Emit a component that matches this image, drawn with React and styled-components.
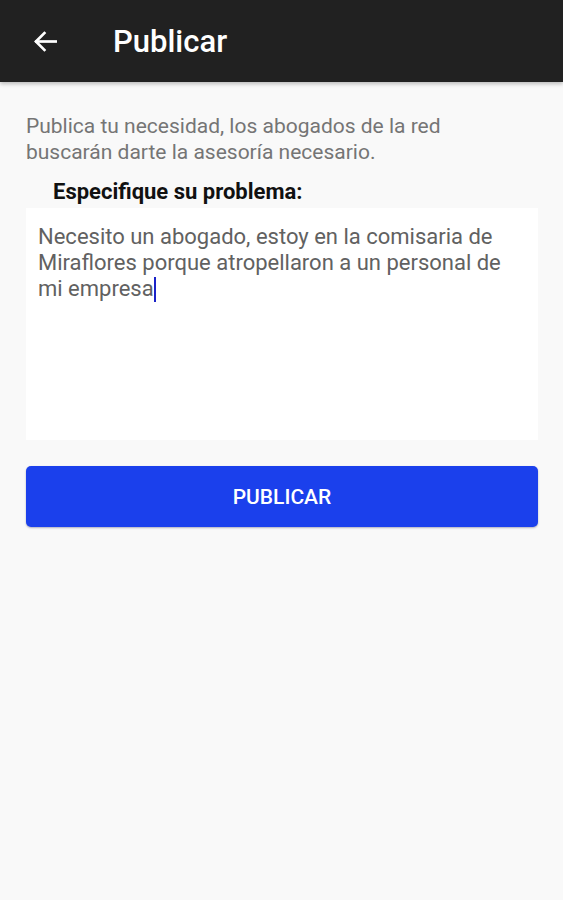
import styled, { createGlobalStyle } from 'styled-components';

const GlobalStyle = createGlobalStyle`
  body {
    margin: 0;
    padding: 0;
    background-color: #f9f9f9;
    font-family: Roboto, 'Noto Sans', sans-serif;
  }
`;

const Screen = styled.div`
  display: flex;
  flex-direction: column;
  min-height: 900px;
  background-color: #f9f9f9;
`;

const TopBar = styled.header`
  height: 82px;
  background-color: #212121;
  display: flex;
  align-items: center;
  padding-left: 30px;
  box-shadow: 0 2px 4px rgba(0,0,0,0.25);
`;

const BackButton = styled.button`
  background: none;
  border: none;
  padding: 0;
  width: 30px;
  height: 30px;
  display: flex;
  align-items: center;
  justify-content: center;
  color: #fff;
`;

const Title = styled.h1`
  margin: 0 0 0 53px;
  font-size: 31px;
  font-weight: 500;
  color: #fff;
`;

const Content = styled.main`
  display: flex;
  flex-direction: column;
  padding: 31px 25px 0 26px;
`;

const Intro = styled.p`
  margin: 0;
  padding-right: 70px;
  font-size: 21px;
  line-height: 26px;
  color: #757575;
`;

const Label = styled.label`
  margin: 14px 0 0 27px;
  font-size: 22px;
  font-weight: 700;
  color: #111;
  line-height: 26px;
`;

const TextBox = styled.div`
  margin-top: 3px;
  height: 232px;
  background-color: #fff;
  padding: 16px 30px 14px 12px;
  box-sizing: border-box;
  font-size: 22px;
  line-height: 26px;
  color: #616161;
`;

const Caret = styled.span`
  display: inline-block;
  width: 2px;
  height: 25px;
  background-color: #1a22c8;
  vertical-align: -6px;
`;

const PrimaryButton = styled.button`
  margin-top: 26px;
  height: 61px;
  border: none;
  border-radius: 5px;
  background-color: #1b40ec;
  color: #fff;
  font-family: Roboto, sans-serif;
  font-size: 21px;
  font-weight: 500;
  box-shadow: 0 1px 2px rgba(0,0,60,0.3);
`;

function App() {
  return (
    <Screen>
      <GlobalStyle />
      <TopBar>
        <BackButton aria-label="Volver">
          <svg width="27" height="27" viewBox="0 0 24 24" fill="none" stroke="#fff" strokeWidth="2.4" strokeLinecap="square">
            <path d="M21 12H4" />
            <path d="M11 4.5L3.5 12L11 19.5" />
          </svg>
        </BackButton>
        <Title>Publicar</Title>
      </TopBar>
      <Content>
        <Intro>
          Publica tu necesidad, los abogados de la red buscarán darte la asesoría necesario.
        </Intro>
        <Label>Especifique su problema:</Label>
        <TextBox>
          Necesito un abogado, estoy en la comisaria de Miraflores porque atropellaron a un personal de mi empresa<Caret />
        </TextBox>
        <PrimaryButton>PUBLICAR</PrimaryButton>
      </Content>
    </Screen>
  );
}

export default App;
